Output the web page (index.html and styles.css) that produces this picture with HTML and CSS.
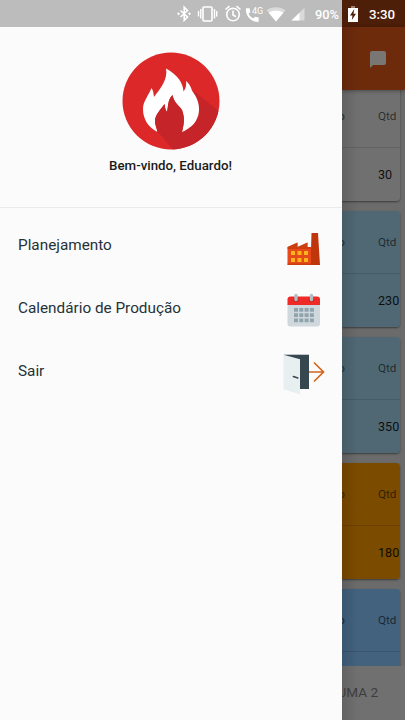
FILE: index.html
```
<!DOCTYPE html>
<html lang="pt-BR">
<head>
<meta charset="utf-8">
<title>Planejamento</title>
<link rel="stylesheet" href="styles.css">
</head>
<body>
<div class="screen">
  <aside class="drawer">
    <div class="status status-left">
      <svg class="status-icons" width="171" height="27" viewBox="165 0 171 27">
        <g fill="none" stroke="#fff" stroke-width="1.6">
          <path d="M180.500 10.500l7 6.500-3.300 3.300V7.200l3.300 3.300-7 6.500"/>
          <rect x="203" y="7" width="9" height="14" rx="1"/>
          <path d="M200.800 9v9.500M198.500 11v5.500M214.500 9v9.500M216.700 11v5.500" stroke-width="1.400"/>
          <circle cx="233" cy="14.500" r="6.300"/>
          <path d="M233 10.500v4.500l3 1.700M225.500 9.500l4-3.300M240.500 9.500l-4-3.300"/>
        </g>
        <path d="M178.500 12.300l1.500 1.500-1.500 1.500-1.500-1.500zM189.500 12.300l1.500 1.500-1.500 1.500-1.500-1.500z" fill="#fff"/>
        <path d="M246.700 8.200h2.900l.8 3.800-1.800 1.800c1.200 2.200 2.500 3.500 4.700 4.700l1.800-1.800 3.600.8v3.400c0 .6-.4 1-.9 1-6.800 0-12-5.600-12-12.600 0-.7.400-1.100.9-1.100z" fill="#fff"/>
        <text x="252" y="13.500" class="network">4G</text>
        <path d="M266.500 10.300C271.500 6.300 280 6.300 285.500 10.300L276 21.500z" fill="#fff" opacity=".45"/>
        <path d="M268.700 12.700c4.500-3 10-3 14.700 0L276 21.500z" fill="#fff"/>
        <path d="M304.500 7.800V20.500H291.500z" fill="#fff" opacity=".45"/>
        <path d="M299.500 12.700v7.800h-8z" fill="#fff"/>
      </svg>
      <span class="battery-level">90%</span>
    </div>
    <div class="profile">
      <svg class="logo" width="98" height="98" viewBox="0 0 98 98">
        <defs><clipPath id="disc"><circle cx="49" cy="49" r="48.500"/></clipPath></defs>
        <g clip-path="url(#disc)">
          <path d="M0 0H98V98H0z" fill="#dc2828"/>
          <path d="M73 40L98 60V98H51L33 76z" fill="#c52528"/>
        </g>
        <path d="M44 16.500C56 23 61 31 61.500 39.500C64 36 64.500 33 64 29C68 32 69 36 70.500 39.500C75 45 77.500 52 77 59C76 70 69 76 60 80C62 72 63 66 60 58C57 53 52 51 50.500 43C45.500 48 46.500 54 45 60C43 57 43 55 42.500 52C39 57 33 63 33 69C33 73 35 77 35.500 80C26 75 21 67 21 57C21 49 27 43 29.500 36C31.500 39 31.500 42 32 45C39 36 46 27 44 16.500z" fill="#fff"/>
        <path d="M50.500 43C45.500 48 46.500 54 45 60C43 57 43 55 42.500 52C39 57 33 63 33 69C33 73 35 77 35.500 80C41 86 54 87 60 80C62 72 63 66 60 58C57 53 52 51 50.500 43z" fill="#c52528"/>
      </svg>
      <div class="welcome">Bem-vindo, Eduardo!</div>
    </div>
    <nav class="menu">
      <a class="item"><span class="label">Planejamento</span>
        <svg width="44" height="44" viewBox="282 226 44 44">
          <path d="M311.500 233h6.500l2 32h-9.500z" fill="#bf360c"/>
          <path d="M287.500 247l10-4.500v4.500l10-4.500v4.500h3.500v18h-23.500z" fill="#e64a19"/>
          <path d="M287.500 247l10-4.500v4.500l10-4.500v4.500h3.500v2h-23.500zM287.500 263.500h24v1.500h-24z" fill="#bf360c" opacity=".65"/>
          <path d="M291 251h4v4h-4zm6.500 0h4v4h-4zm6.500 0h4v4h-4zM291 258h4v4h-4zm6.500 0h4v4h-4zm6.500 0h4v4h-4z" fill="#ffb41c"/>
        </svg></a>
      <a class="item"><span class="label">Calendário de Produção</span>
        <svg width="44" height="44" viewBox="282 289 44 44">
          <path d="M287.500 304h32.500v19.500a3 3 0 0 1-3 3h-26.500a3 3 0 0 1-3-3z" fill="#cfd8dc"/>
          <path d="M287.500 305v-5.500a3 3 0 0 1 3-3H317a3 3 0 0 1 3 3v5.500z" fill="#ee2b27"/>
          <circle cx="296" cy="299.500" r="2.700" fill="#c62828"/><circle cx="311.500" cy="299.500" r="2.700" fill="#c62828"/>
          <path d="M296 295.500v4M311.500 295.500v4" stroke="#b0bec5" stroke-width="3.400" stroke-linecap="round"/>
          <path d="M294 308h4v3.800h-4zm5.300 0h4v3.800h-4zm5.300 0h4v3.800h-4zm5.300 0h4v3.800h-4zM294 313.200h4v3.800h-4zm5.300 0h4v3.800h-4zm5.300 0h4v3.800h-4zm5.300 0h4v3.800h-4zM294 318.400h4v3.800h-4zm5.300 0h4v3.800h-4zm5.300 0h4v3.800h-4zm5.300 0h4v3.800h-4z" fill="#90a4ae"/>
        </svg></a>
      <a class="item"><span class="label">Sair</span>
        <svg width="44" height="44" viewBox="282 352 44 44">
          <path d="M284 354.700h25V389h-25z" fill="#37474f"/>
          <path d="M283.500 354.700l16.500 4.500v35l-16.500-5z" fill="#e8eff1"/>
          <path d="M293.300 376.500l4.500 1.500" stroke="#37474f" stroke-width="1.400" stroke-linecap="round"/>
          <path d="M309 372h14M314 362.500l9.500 9.500-9.500 9.500" fill="none" stroke="#d2661f" stroke-width="1.700"/>
        </svg></a>
    </nav>
  </aside>
  <main class="page">
    <div class="status status-right">
      <svg width="12" height="16" viewBox="0 0 12 16"><path d="M4 0h4v2H4z" fill="#a08070"/><path d="M1 2h10v14H1z" fill="#fff"/><path d="M7.300 3L3 9.500h2.500L4.800 14 9 7.800H6.500z" fill="#4d1e08"/></svg>
      <span class="time">3:30</span>
    </div>
    <header class="toolbar">
      <svg width="18" height="18" viewBox="0 0 18 18"><path d="M3 1h12a2 2 0 0 1 2 2v10a2 2 0 0 1-2 2H4l-3 3V3a2 2 0 0 1 2-2z" fill="#797673"/></svg>
    </header>
    <section class="list">
      <article class="card gray"><div class="head"><span class="clip"><span>o</span></span><span>Qtd</span></div><div class="value">30</div></article>
      <article class="card sky"><div class="head"><span class="clip"><span>o</span></span><span>Qtd</span></div><div class="value">230</div></article>
      <article class="card sky"><div class="head"><span class="clip"><span>o</span></span><span>Qtd</span></div><div class="value">350</div></article>
      <article class="card amber"><div class="head"><span class="clip"><span>o</span></span><span>Qtd</span></div><div class="value">180</div></article>
      <article class="card blue"><div class="head"><span class="clip"><span>o</span></span><span>Qtd</span></div><div class="value"></div></article>
    </section>
    <footer class="tabs"><span>UMA 2</span></footer>
  </main>
</div>
</body>
</html>
```
FILE: styles.css
```
* { box-sizing: border-box; }
body { margin: 0; font-family: Roboto, sans-serif; }
.screen { display: flex; width: 405px; height: 720px; overflow: hidden; }
.drawer { width: 342px; background: #fbfbfb; }
.status { display: flex; align-items: center; height: 27px; color: #fff; font-size: 13px; }
.status-left { background: #bcbcbc; padding-left: 165px; }
.status-icons { flex: none; width: 171px; margin-right: -21px; }
.network { font-size: 9px; fill: #fff; }
.battery-level { padding-top: 1px; font-weight: 500; font-size: 12.800px; }
.profile { display: flex; flex-direction: column; align-items: center; height: 181px; padding: 25px 1px 0 0; border-bottom: 1px solid #ebebeb; }
.logo { flex: none; }
.welcome { margin-top: 7px; font-size: 13.300px; line-height: 18px; font-weight: 500; color: #1b1b1b; white-space: nowrap; }
.menu { padding-top: 18px; }
.item { display: flex; justify-content: space-between; height: 63px; padding: 0 16px 0 18px; }
.label { padding-top: 10px; font-size: 15.300px; line-height: 18px; color: #263238; }
.page { display: flex; flex-direction: column; width: 63px; overflow: hidden; background: linear-gradient(90deg, #5e5e5e, #6b6b6b 16px); }
.status-right { flex: none; background: #4d1e08; padding-left: 5px; }
.time { margin: 1px 0 0 10px; font-weight: 500; font-size: 13.300px; }
.toolbar { flex: none; position: relative; z-index: 1; height: 63px; padding: 23px 0 0 27px; background: linear-gradient(90deg, #60260b, #6e2b0c 16px); box-shadow: 0 1px 4px rgba(0, 0, 0, .35); }
.list { display: flex; flex-direction: column; gap: 10px; height: 581px; margin-top: -5px; overflow: hidden; }
.card { flex: none; width: 58px; height: 116px; border-radius: 0 4px 4px 0; box-shadow: 0 1px 2px rgba(0, 0, 0, .45); }
.head { display: flex; height: 63px; padding-top: 22px; border-bottom: 1px solid rgba(0, 0, 0, .12); font-size: 11.700px; line-height: 18px; color: rgba(0, 0, 0, .62); }
.clip { display: flex; justify-content: flex-end; width: 3px; margin-right: 33px; overflow: hidden; }
.value { padding: 18px 0 0 36px; font-size: 12.600px; line-height: 18px; color: rgba(0, 0, 0, .88); }
.gray { background: linear-gradient(90deg, #626262, #707070 16px); }
.sky { background: linear-gradient(90deg, #465d68, #506873 16px); }
.amber { background: linear-gradient(90deg, #6d4200, #7b4b00 16px); }
.blue { background: linear-gradient(90deg, #395670, #43627d 16px); }
.tabs { flex: none; display: flex; justify-content: flex-end; height: 54px; padding: 17px 27px 0 0; overflow: hidden; background: linear-gradient(90deg, #636363, #707070 16px); color: #3d3d3d; font-size: 13.500px; line-height: 18px; white-space: nowrap; }
```
